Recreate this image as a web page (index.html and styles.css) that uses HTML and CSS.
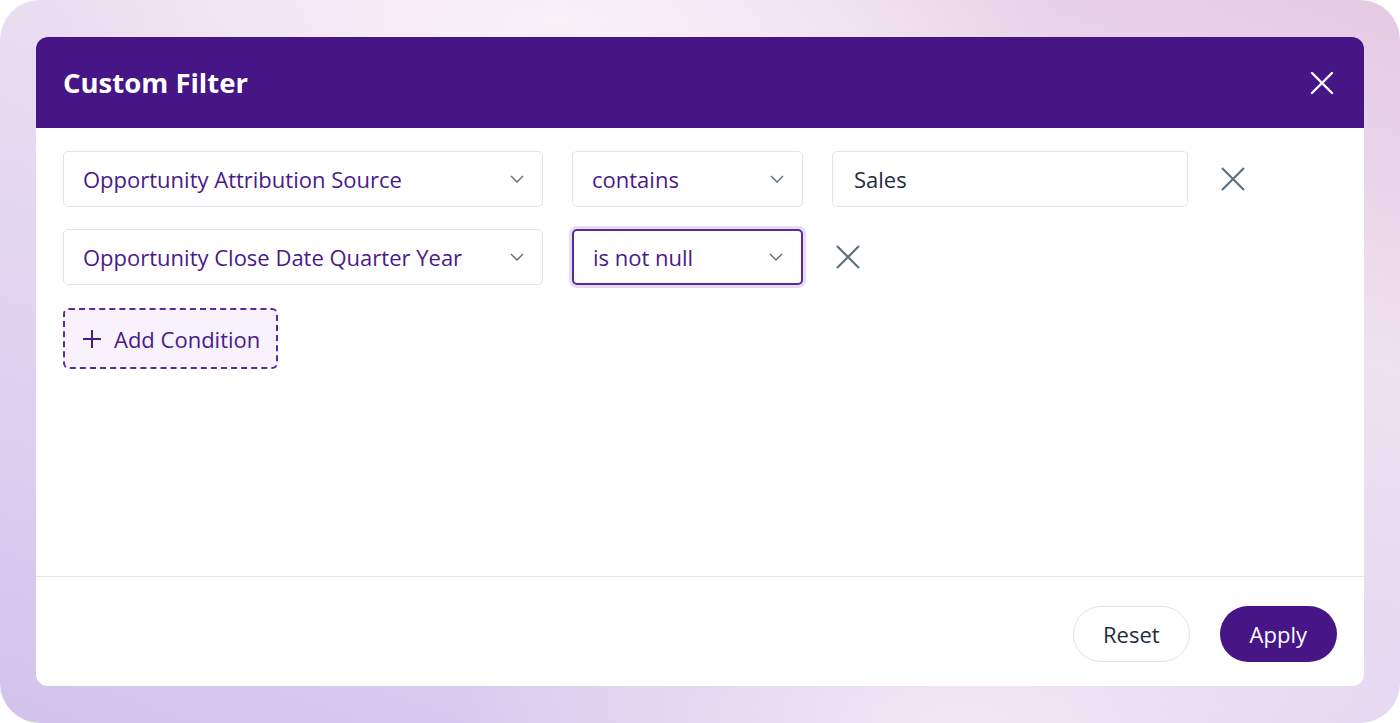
FILE: index.html
```html
<!DOCTYPE html>
<html lang="en">
<head>
<meta charset="UTF-8">
<meta name="viewport" content="width=device-width, initial-scale=1.0">
<title>Custom Filter</title>
<link rel="stylesheet" href="styles.css">
</head>
<body>
<div class="frame">
  <div class="dialog">
    <div class="dialog-header">
      <h2>Custom Filter</h2>
      <button class="close-btn" aria-label="Close">
        <svg width="24" height="24" viewBox="0 0 24 24"><path d="M2 2 L22 22 M22 2 L2 22" stroke="#fff" stroke-width="2.4" stroke-linecap="round"/></svg>
      </button>
    </div>

    <div class="dialog-body">
      <div class="condition">
        <div class="select field-wide">
          <span>Opportunity Attribution Source</span>
          <svg class="chevron" width="14" height="8" viewBox="0 0 14 8"><path d="M1 1 L7 7 L13 1" fill="none" stroke="#5b6b78" stroke-width="1.4"/></svg>
        </div>
        <div class="select field-op">
          <span>contains</span>
          <svg class="chevron" width="14" height="8" viewBox="0 0 14 8"><path d="M1 1 L7 7 L13 1" fill="none" stroke="#5b6b78" stroke-width="1.4"/></svg>
        </div>
        <div class="text-input">Sales</div>
        <button class="remove-btn" aria-label="Remove">
          <svg width="24" height="24" viewBox="0 0 24 24"><path d="M1 1 L23 23 M23 1 L1 23" stroke="#5f717d" stroke-width="2.2"/></svg>
        </button>
      </div>

      <div class="condition">
        <div class="select field-wide">
          <span>Opportunity Close Date Quarter Year</span>
          <svg class="chevron" width="14" height="8" viewBox="0 0 14 8"><path d="M1 1 L7 7 L13 1" fill="none" stroke="#5b6b78" stroke-width="1.4"/></svg>
        </div>
        <div class="select field-op focused">
          <span>is not null</span>
          <svg class="chevron" width="14" height="8" viewBox="0 0 14 8"><path d="M1 1 L7 7 L13 1" fill="none" stroke="#5b6b78" stroke-width="1.4"/></svg>
        </div>
        <button class="remove-btn" aria-label="Remove">
          <svg width="24" height="24" viewBox="0 0 24 24"><path d="M1 1 L23 23 M23 1 L1 23" stroke="#5f717d" stroke-width="2.2"/></svg>
        </button>
      </div>

      <button class="add-btn">
        <svg width="20" height="20" viewBox="0 0 20 20"><path d="M10 1 V19 M1 10 H19" stroke="#4a1a8a" stroke-width="2"/></svg>
        Add Condition
      </button>
    </div>

    <div class="dialog-footer">
      <button class="btn btn-reset">Reset</button>
      <button class="btn btn-apply">Apply</button>
    </div>
  </div>
</div>
</body>
</html>
```

FILE: styles.css
```css
html, body {
    margin: 0;
    padding: 0;
    background: #fff;
}

body {
    font-family: "Open Sans", "Noto Sans", sans-serif;
}

.frame {
    width: 1400px;
    height: 723px;
    box-sizing: border-box;
    padding: 37px 36px;
    border-radius: 40px;
    background:
        radial-gradient(ellipse 500px 180px at 560px 20px, rgba(250, 244, 250, 0.9), rgba(250, 244, 250, 0)),
        radial-gradient(ellipse 500px 160px at 960px 720px, rgba(248, 236, 246, 0.8), rgba(248, 236, 246, 0)),
        linear-gradient(20deg, #d2c3ec 0%, #e4d9f1 45%, #efe1f0 70%, #e4c9e3 100%);
}

.dialog {
    height: 649px;
    background: #fff;
    border-radius: 12px;
    overflow: hidden;
    display: flex;
    flex-direction: column;
}

.dialog-header {
    height: 91px;
    background: #461686;
    display: flex;
    align-items: center;
    justify-content: space-between;
    padding: 0 30px 0 27px;
    flex-shrink: 0;
}

.dialog-header h2 {
    margin: 0;
    color: #fff;
    font-size: 27.5px;
    font-weight: 700;
}

.close-btn,
.remove-btn {
    background: none;
    border: none;
    padding: 0;
    cursor: pointer;
    display: flex;
}

.dialog-body {
    flex: 1;
    padding: 23px 27px;
    display: flex;
    flex-direction: column;
    align-items: flex-start;
    gap: 22px;
}

.condition {
    display: flex;
    align-items: center;
    gap: 29px;
}

.select,
.text-input {
    height: 56px;
    box-sizing: border-box;
    border: 1.5px solid #e0e4e8;
    border-radius: 5px;
    background: #fff;
    display: flex;
    align-items: center;
    font-size: 22px;
}

.select {
    justify-content: space-between;
    padding: 0 18px 0 19px;
    color: #4a1a8a;
}

.field-wide {
    width: 480px;
}

.field-op {
    width: 231px;
}

.select.focused {
    border: 2px solid #5a2a9a;
    box-shadow: 0 0 0 3px #e6dcf4;
}

.text-input {
    width: 356px;
    padding: 0 21px;
    color: #1e2d3c;
}

.condition .remove-btn {
    margin-left: 4px;
}

.add-btn {
    height: 61px;
    box-sizing: border-box;
    margin-top: 1px;
    padding: 0 16px 0 17px;
    border: 2px dashed #5a2a9a;
    border-radius: 6px;
    background: #f8f2fd;
    color: #4a1a8a;
    font-family: inherit;
    font-size: 22px;
    display: flex;
    align-items: center;
    gap: 12px;
    cursor: pointer;
}

.dialog-footer {
    height: 110px;
    box-sizing: border-box;
    border-top: 1.5px solid #e1e6e8;
    display: flex;
    align-items: center;
    justify-content: flex-end;
    gap: 30px;
    padding: 5px 27px 0 0;
    flex-shrink: 0;
}

.btn {
    height: 56px;
    border-radius: 28px;
    font-family: inherit;
    font-size: 22px;
    padding: 0 29px;
    cursor: pointer;
}

.btn-reset {
    background: #fff;
    border: 1.5px solid #dfe3e7;
    color: #1e2d3c;
}

.btn-apply {
    background: #461686;
    border: none;
    color: #fff;
    padding: 0 30px;
}
```
